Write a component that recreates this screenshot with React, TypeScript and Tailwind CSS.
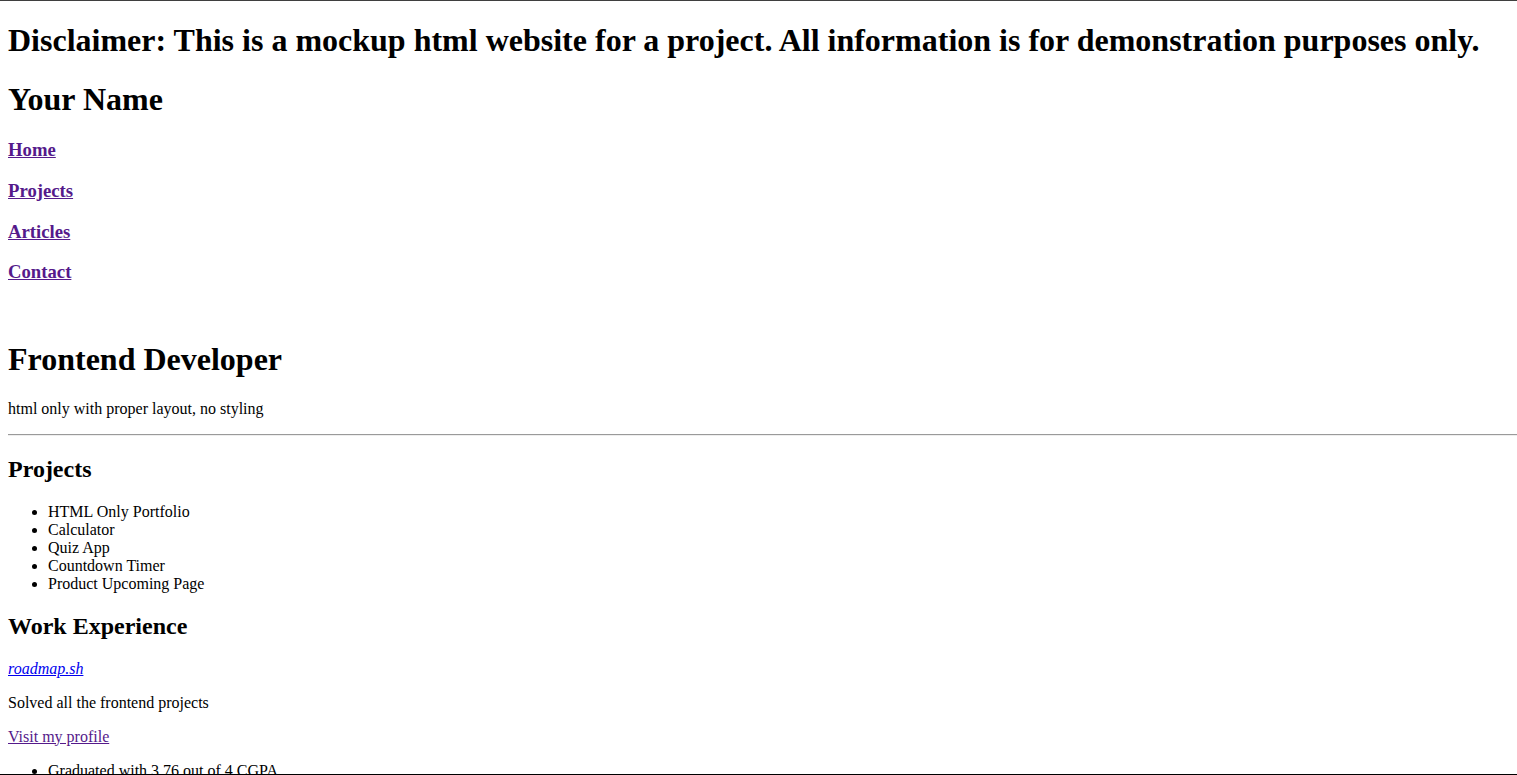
import React from "react";

export default function App() {
  const navLinks = ["Home", "Projects", "Articles", "Contact"];
  const projects = [
    "HTML Only Portfolio",
    "Calculator",
    "Quiz App",
    "Countdown Timer",
    "Product Upcoming Page",
  ];
  return (
    <div className="h-[775px] overflow-hidden border-t border-b border-t-[#3f3f3f] border-b-black bg-white px-2 font-['Liberation_Serif','Times_New_Roman',serif] text-[16px] leading-[18px] text-black">
      <h1 className="mt-[21.44px] mb-[21.44px] text-[32px] leading-[37px] font-bold">
        Disclaimer: This is a mockup html website for a project. All information is for demonstration purposes only.
      </h1>
      <header>
        <h1 className="mt-[21.44px] mb-[21.44px] text-[32px] leading-[37px] font-bold">Your Name</h1>
        <nav>
          {navLinks.map((l) => (
            <h3 key={l} className="my-[18.72px] text-[18.72px] leading-[22px] font-bold">
              <a href="#" className="text-[#551a8b] underline">
                {l}
              </a>
            </h3>
          ))}
        </nav>
      </header>
      <section>
        <h1 className="mt-[58px] mb-[21.44px] text-[32px] leading-[37px] font-bold">Frontend Developer</h1>
        <p className="my-4">html only with proper layout, no styling</p>
      </section>
      <hr className="my-2 mr-[-8px] h-0 border-t border-b border-t-[#9a9a9a] border-b-[#eeeeee]" />
      <section>
        <h2 className="my-[19.92px] text-[24px] leading-[27px] font-bold">Projects</h2>
        <ul className="my-4 list-disc pl-10">
          {projects.map((p) => (
            <li key={p}>{p}</li>
          ))}
        </ul>
      </section>
      <section>
        <h2 className="my-[19.92px] text-[24px] leading-[27px] font-bold">Work Experience</h2>
        <p className="my-4">
          <a href="#" className="text-[#0000ee] underline">
            <i>roadmap.sh</i>
          </a>
        </p>
        <p className="my-4">Solved all the frontend projects</p>
        <p className="my-4">
          <a href="#" className="text-[#551a8b] underline">
            Visit my profile
          </a>
        </p>
        <ul className="my-4 list-disc pl-10">
          <li>Graduated with 3.76 out of 4 CGPA</li>
          <li>Completed all the frontend roadmap projects</li>
        </ul>
      </section>
    </div>
  );
}
